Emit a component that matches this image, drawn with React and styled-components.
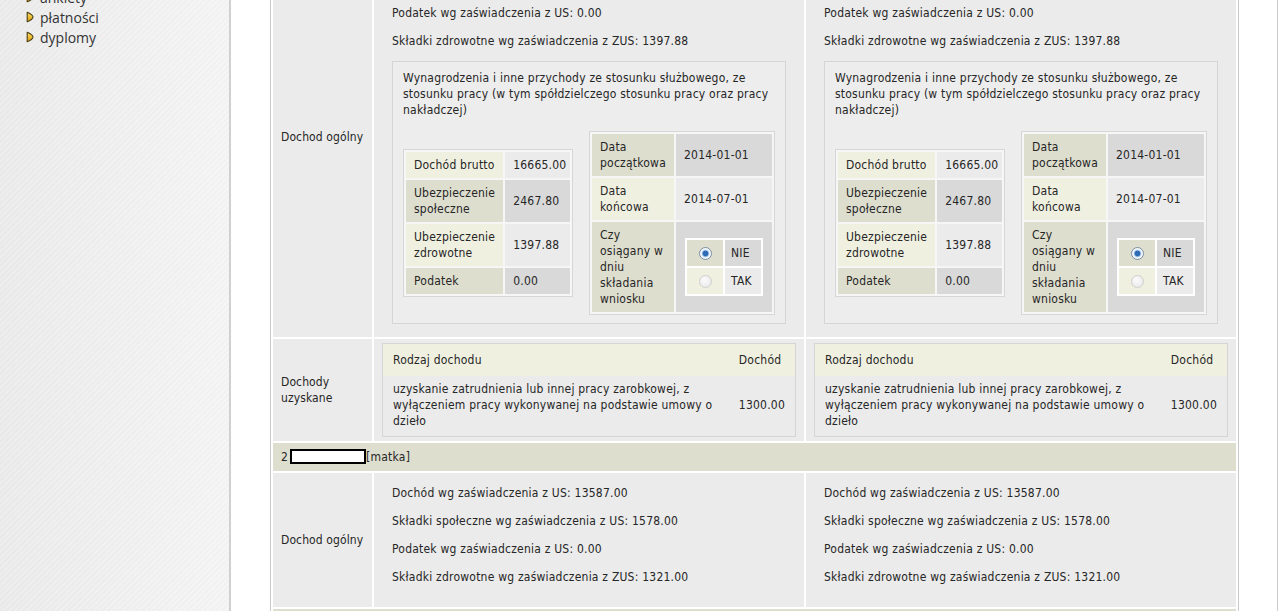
import React from "react";
import styled, { createGlobalStyle } from "styled-components";

const GlobalStyle = createGlobalStyle`
	* { box-sizing: border-box; }
	body {
		margin: 0;
		background: #fff;
		font-family: "DejaVu Sans Condensed", "DejaVu Sans", sans-serif;
		font-size: 12px;
		letter-spacing: 0.22px;
		color: #262626;
		overflow: hidden;
	}
`;

const tones = {
	cream: "#f0f0e1",
	olive: "#dedecf",
	gray: "#d9d9d9",
	light: "#ebebeb",
};

const Bullet = () => (
	<svg width="8" height="12" viewBox="0 0 8 12">
		<defs>
			<linearGradient id="bl" x1="0" y1="0" x2="0" y2="1">
				<stop offset="0" stopColor="#ffe36a" />
				<stop offset="1" stopColor="#d99a05" />
			</linearGradient>
		</defs>
		<path d="M1.2 1.2 C4.5 2.6 7 4.5 7 6 C7 7.5 4.5 9.4 1.2 10.8 Z" fill="url(#bl)" stroke="#4a3d14" strokeWidth="1.1" strokeLinejoin="round" />
	</svg>
);

const menu = ["ankiety", "płatności", "dyplomy"];

const App = () => {
	return (
		<>
			<GlobalStyle />
			<Page>
				<Sidebar>
					<Menu>
						{menu.map((item) => (
							<MenuItem key={item}>
								<Bullet />
								{item}
							</MenuItem>
						))}
					</Menu>
				</Sidebar>
				<Main>
					<Grid>
						<colgroup>
							<col style={{ width: 99 }} />
							<col style={{ width: 430 }} />
							<col style={{ width: 430 }} />
						</colgroup>
						<tbody>
							<tr>
								<LabelCell>Dochod ogólny</LabelCell>
								<ContentCell>
									<GeneralIncome first />
								</ContentCell>
								<ContentCell>
									<GeneralIncome first />
								</ContentCell>
							</tr>
							<tr>
								<LabelCell>Dochody uzyskane</LabelCell>
								<ContentCell>
									<ObtainedIncome />
								</ContentCell>
								<ContentCell>
									<ObtainedIncome />
								</ContentCell>
							</tr>
							<tr>
								<PersonCell colSpan={3}>
									2<Redacted />[matka]
								</PersonCell>
							</tr>
							<tr>
								<LabelCell>Dochod ogólny</LabelCell>
								<ContentCell>
									<GeneralIncome />
								</ContentCell>
								<ContentCell>
									<GeneralIncome />
								</ContentCell>
							</tr>
							<tr>
								<PersonCell colSpan={3}>&nbsp;</PersonCell>
							</tr>
						</tbody>
					</Grid>
				</Main>
			</Page>
		</>
	);
};

const GeneralIncome = ({ first }) => {
	if (!first) {
		return (
			<Summary>
				<Line>Dochód wg zaświadczenia z US: 13587.00</Line>
				<Line>Składki społeczne wg zaświadczenia z US: 1578.00</Line>
				<Line>Podatek wg zaświadczenia z US: 0.00</Line>
				<Line>Składki zdrowotne wg zaświadczenia z ZUS: 1321.00</Line>
			</Summary>
		);
	}
	return (
		<Summary>
			<Line>Dochód wg zaświadczenia z US: 14197.20</Line>
			<Line>Składki społeczne wg zaświadczenia z US: 2467.80</Line>
			<Line>Podatek wg zaświadczenia z US: 0.00</Line>
			<Line>Składki zdrowotne wg zaświadczenia z ZUS: 1397.88</Line>
			<Box>
				<BoxText>
					Wynagrodzenia i inne przychody ze stosunku służbowego, ze stosunku pracy (w tym
					spółdzielczego stosunku pracy oraz pracy nakładczej)
				</BoxText>
				<Pair>
					<Details>
						<tbody>
							<tr>
								<DCell tone='cream' width={95}>Dochód brutto</DCell>
								<DCell tone='light' width={64} tight>16665.00</DCell>
							</tr>
							<tr>
								<DCell tone='olive'>Ubezpieczenie społeczne</DCell>
								<DCell tone='gray' tight>2467.80</DCell>
							</tr>
							<tr>
								<DCell tone='cream'>Ubezpieczenie zdrowotne</DCell>
								<DCell tone='light' tight>1397.88</DCell>
							</tr>
							<tr>
								<DCell tone='olive'>Podatek</DCell>
								<DCell tone='gray' tight>0.00</DCell>
							</tr>
						</tbody>
					</Details>
					<Details>
						<tbody>
							<tr>
								<DCell tone='olive' width={80}>Data początkowa</DCell>
								<DCell tone='gray' width={96}>2014-01-01</DCell>
							</tr>
							<tr>
								<DCell tone='cream'>Data końcowa</DCell>
								<DCell tone='light'>2014-07-01</DCell>
							</tr>
							<tr>
								<DCell tone='olive'>Czy osiągany w dniu składania wniosku</DCell>
								<DCell tone='gray'>
									<Choices>
										<tbody>
											<tr>
												<ChoiceCell tone='olive' center>
													<Radio checked />
												</ChoiceCell>
												<ChoiceCell tone='gray'>NIE</ChoiceCell>
											</tr>
											<tr>
												<ChoiceCell tone='cream' center>
													<Radio />
												</ChoiceCell>
												<ChoiceCell tone='light'>TAK</ChoiceCell>
											</tr>
										</tbody>
									</Choices>
								</DCell>
							</tr>
						</tbody>
					</Details>
				</Pair>
			</Box>
		</Summary>
	);
};

const ObtainedIncome = () => (
	<Obtained>
		<thead>
			<tr>
				<ObtainedHead>Rodzaj dochodu</ObtainedHead>
				<ObtainedHead width={65}>Dochód</ObtainedHead>
			</tr>
		</thead>
		<tbody>
			<tr>
				<ObtainedCell>
					uzyskanie zatrudnienia lub innej pracy zarobkowej, z wyłączeniem pracy wykonywanej na
					podstawie umowy o dzieło
				</ObtainedCell>
				<ObtainedCell>1300.00</ObtainedCell>
			</tr>
		</tbody>
	</Obtained>
);

const Page = styled.div`
	display: flex;
	margin-top: -66px;
	min-height: 900px;
`;
const Sidebar = styled.aside`
	flex: none;
	width: 231px;
	border-right: 2px solid #d0d0d0;
	background:
		linear-gradient(90deg, rgba(235, 235, 235, 0.5), rgba(250, 250, 250, 0.6)),
		repeating-linear-gradient(135deg, #efefef 0 2px, #e6e6e6 2px 4px);
`;
const Menu = styled.ul`
	list-style: none;
	margin: 0;
	padding: 53px 0 0 26px;
`;
const MenuItem = styled.li`
	display: flex;
	align-items: center;
	gap: 6px;
	height: 20px;
	font-family: "Open Sans", "Noto Sans", sans-serif;
	font-size: 14px;
	letter-spacing: 0;
	color: #333;
`;
const Main = styled.main`
	flex: none;
	width: 1047px;
	padding-left: 39px;
	border-right: 1px solid #cbcbcb;
`;
const Grid = styled.table`
	width: 969px;
	table-layout: fixed;
	border-collapse: separate;
	border-spacing: 2px;
	border: 1px solid #c9c9c9;
	background: #fff;
`;
const LabelCell = styled.td`
	padding: 4px 3px 4px 8px;
	background: #ebebeb;
	vertical-align: middle;
	line-height: 16px;
	letter-spacing: 0.1px;
`;
const ContentCell = styled.td`
	padding: 4px 8px;
	background: #ebebeb;
	vertical-align: top;
`;
const PersonCell = styled.td`
	padding: 6px 8px;
	background: #dedecf;
	line-height: 16px;
`;
const Redacted = styled.span`
	display: inline-block;
	width: 76px;
	height: 15px;
	margin: 0 0 -3px 2px;
	border: 2px solid #000;
	background: #fff;
`;
const Summary = styled.div`
	padding: 8px 10px 6px;
`;
const Line = styled.p`
	margin: 0 0 12px;
	line-height: 16px;
`;
const Box = styled.div`
	margin-bottom: 3px;
	padding: 8px 10px;
	border: 1px solid #d5d5d5;
	background: #ededed;
`;
const BoxText = styled.p`
	margin: 0 0 13px;
	line-height: 16px;
`;
const Pair = styled.div`
	display: flex;
	justify-content: space-between;
	align-items: center;
`;
const Details = styled.table`
	border-collapse: separate;
	border-spacing: 2px;
	border: 1px solid #d6d6d6;
	background: #f6f6f6;
`;
const DCell = styled.td`
	width: ${(p) => (p.width ? `${p.width}px` : "auto")};
	padding: ${(p) => (p.tight ? "5px 4px 5px 8px" : "5px 8px")};
	background: ${(p) => tones[p.tone]};
	line-height: 16px;
	vertical-align: middle;
`;
const Choices = styled.table`
	margin: 0 auto;
	border-collapse: separate;
	border-spacing: 2px;
	background: #fff;
`;
const ChoiceCell = styled.td`
	width: 36px;
	height: 26px;
	padding: 0 6px;
	background: ${(p) => tones[p.tone]};
	text-align: ${(p) => (p.center ? "center" : "left")};
	line-height: 16px;
`;
const Radio = styled.span`
	display: inline-block;
	width: 13px;
	height: 13px;
	vertical-align: middle;
	border-radius: 50%;
	border: 1px solid ${(p) => (p.checked ? "#7a8ea6" : "#cfcfcf")};
	background: ${(p) =>
		p.checked
			? "radial-gradient(circle at 50% 50%, #2d6ab3 0 2.5px, #7fb0e0 3px, #e8eef5 4px, #fff 6px)"
			: "radial-gradient(circle at 40% 35%, #fbfbfb, #e6e6e6)"};
`;
const Obtained = styled.table`
	width: 100%;
	border-collapse: collapse;
	border: 1px solid #d5d5d5;
	background: #ebebeb;
`;
const ObtainedHead = styled.th`
	width: ${(p) => (p.width ? `${p.width}px` : "auto")};
	padding: 8px 10px;
	background: #f0f0e1;
	font-weight: normal;
	text-align: left;
	line-height: 16px;
`;
const ObtainedCell = styled.td`
	padding: 5px 10px 7px;
	line-height: 16px;
	vertical-align: middle;
`;

export default App;
